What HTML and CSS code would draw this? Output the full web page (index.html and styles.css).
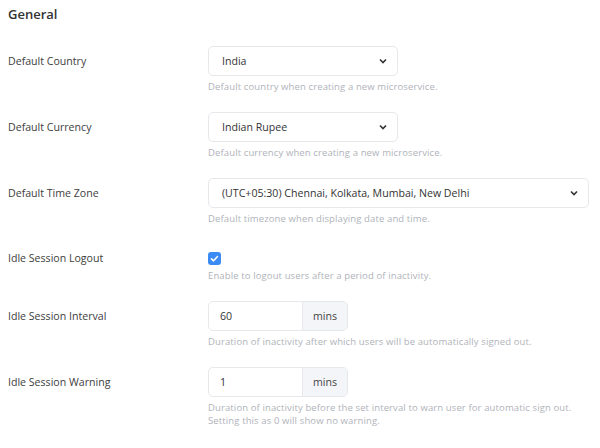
FILE: index.html
```html
<!DOCTYPE html>
<html>
<head>
<meta charset="utf-8">
<link rel="stylesheet" href="styles.css">
</head>
<body>
<div class="page">
  <h2 class="title">General</h2>
  <div class="rows">
    <div class="row">
      <div class="label">Default Country</div>
      <div class="field">
        <div class="select w190"><span>India</span><svg class="chev" width="8" height="6" viewBox="0 0 8 6"><path d="M1 1.5 L4 4.5 L7 1.5" fill="none" stroke="#333" stroke-width="1.6"/></svg></div>
        <div class="help">Default country when creating a new microservice.</div>
      </div>
    </div>
    <div class="row">
      <div class="label">Default Currency</div>
      <div class="field">
        <div class="select w190"><span>Indian Rupee</span><svg class="chev" width="8" height="6" viewBox="0 0 8 6"><path d="M1 1.5 L4 4.5 L7 1.5" fill="none" stroke="#333" stroke-width="1.6"/></svg></div>
        <div class="help">Default currency when creating a new microservice.</div>
      </div>
    </div>
    <div class="row">
      <div class="label">Default Time Zone</div>
      <div class="field">
        <div class="select w381"><span>(UTC+05:30) Chennai, Kolkata, Mumbai, New Delhi</span><svg class="chev" width="8" height="6" viewBox="0 0 8 6"><path d="M1 1.5 L4 4.5 L7 1.5" fill="none" stroke="#333" stroke-width="1.6"/></svg></div>
        <div class="help">Default timezone when displaying date and time.</div>
      </div>
    </div>
    <div class="row row-check">
      <div class="label">Idle Session Logout</div>
      <div class="field">
        <div class="checkwrap"><span class="checkbox"><svg width="13" height="13" viewBox="0 0 13 13"><path d="M3.5 6.8 L5.6 8.8 L9.5 4.5" fill="none" stroke="#fff" stroke-width="1.6" stroke-linecap="round" stroke-linejoin="round"/></svg></span></div>
        <div class="help">Enable to logout users after a period of inactivity.</div>
      </div>
    </div>
    <div class="row">
      <div class="label">Idle Session Interval</div>
      <div class="field">
        <div class="group"><span class="gin">60</span><span class="addon">mins</span></div>
        <div class="help">Duration of inactivity after which users will be automatically signed out.</div>
      </div>
    </div>
    <div class="row">
      <div class="label">Idle Session Warning</div>
      <div class="field">
        <div class="group"><span class="gin">1</span><span class="addon">mins</span></div>
        <div class="help">Duration of inactivity before the set interval to warn user for automatic sign out.<br>Setting this as 0 will show no warning.</div>
      </div>
    </div>
  </div>
</div>
</body>
</html>
```
FILE: styles.css
```css
html, body { margin: 0; padding: 0; background: #fff; }
body { font-family: "Open Sans", "Noto Sans", sans-serif; color: #3a3a3a; }
.page { padding: 0 8px; }
.title { margin: 6px 0 0; font-size: 13px; line-height: 16px; font-weight: 600; color: #333; }
.rows { margin-top: 24px; display: flex; flex-direction: column; gap: 19px; }
.row { display: grid; grid-template-columns: 200px 1fr; align-items: start; }
.label { font-size: 10.6px; line-height: 30px; height: 30px; color: #404040; }
.row-check .label { line-height: 14px; height: 14px; margin-top: 7px; }
.field { display: flex; flex-direction: column; }
.select { height: 30px; box-sizing: border-box; border: 1px solid #e6e8ec; border-radius: 5px; display: flex; align-items: center; justify-content: space-between; padding: 0 10px 0 13px; font-size: 10.6px; color: #333; }
.w190 { width: 190px; }
.w381 { width: 381px; }
.help { margin-top: 4px; font-size: 9.5px; letter-spacing: 0.12px; line-height: 13px; color: #b0b3ba; }
.checkwrap { margin-top: 7px; height: 14px; display: flex; align-items: center; }
.checkbox { width: 13px; height: 13px; border-radius: 3px; background: #3b8bf5; display: block; }
.checkbox svg { display: block; }
.group { display: flex; width: 140px; height: 30px; box-sizing: border-box; border: 1px solid #e6e8ec; border-radius: 5px; overflow: hidden; font-size: 10.6px; }
.gin { width: 94px; box-sizing: border-box; padding-left: 11px; display: flex; align-items: center; color: #333; border-right: 1px solid #e6e8ec; }
.addon { flex: 1; background: #f4f5f8; display: flex; align-items: center; justify-content: center; color: #444; }
```
